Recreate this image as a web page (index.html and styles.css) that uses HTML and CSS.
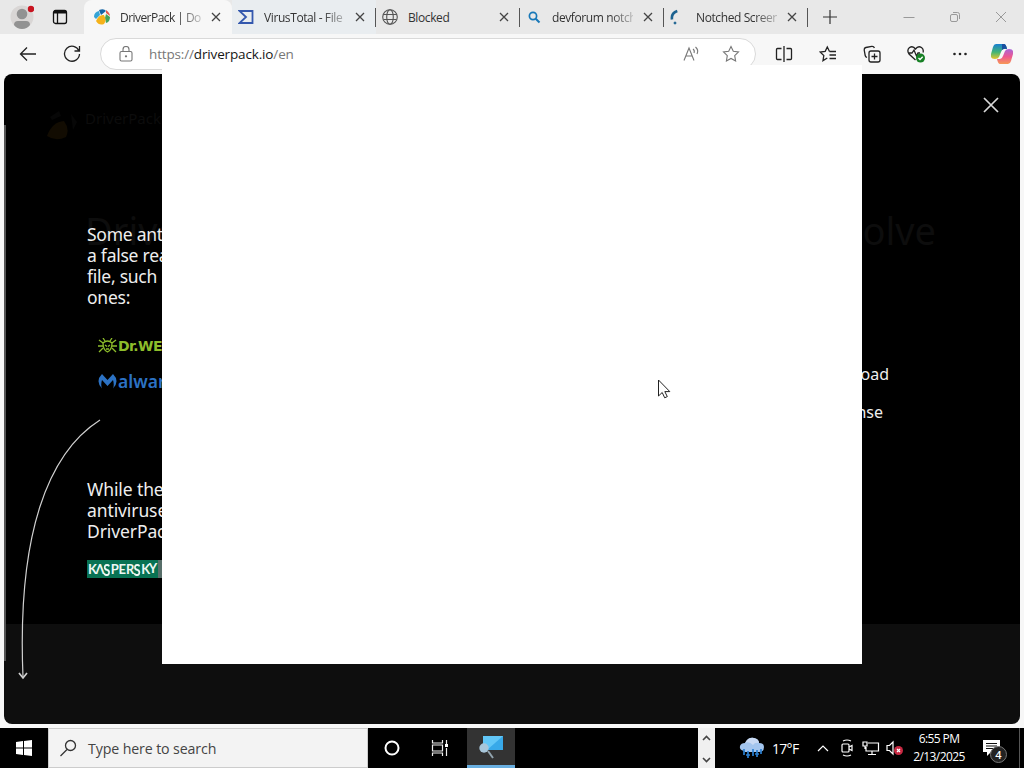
FILE: index.html
```html
<!DOCTYPE html>
<html lang="en">
<head>
    <meta charset="UTF-8">
    <meta name="viewport" content="width=device-width, initial-scale=1.0">
    <title>DriverPack</title>
    <link rel="stylesheet" href="styles.css">
</head>
<body>
    <!-- Tabs -->
    <div class="tab-bar">
        <div class="profile">
            <svg width="24" height="26" viewBox="0 0 24 26"><circle cx="12" cy="13" r="11.5" fill="#d9d6d5"/><circle cx="12" cy="10" r="5.3" fill="#929292"/><path d="M4 21q0-4 4-4h8q4 0 4 4-3 4-8 4t-8-4z" fill="#929292"/><circle cx="21" cy="5" r="3.2" fill="#c81420"/></svg>
        </div>
        <div class="tab-menu">
            <svg width="16" height="16" viewBox="0 0 16 16" fill="none" stroke="#111" stroke-width="1.3"><rect x="1.5" y="1.5" width="13" height="13" rx="2"/><path d="M2 3h12" stroke-width="3"/><path d="M5.5 4v10"/></svg>
        </div>
        <div class="tab active">
            <svg width="16" height="16" viewBox="0 0 16 16"><path d="M0 8Q0 3 5 2l1 4-4 4z" fill="#36a4d6"/><path d="M5 1q5-2 7 1L7 6z" fill="#1565a5"/><path d="M12 1q4 3 4 6l-4-3z" fill="#e2574c"/><path d="M12 5l4 3q0 5-4 6l-1-5z" fill="#45a45c"/><path d="M2 12Q5 5 10 6q3 6 0 9-5 2-8-3z" fill="#f5b21a"/></svg>
            <span class="tab-title fade">DriverPack | Do</span>
            <svg class="tab-close" width="10" height="10" viewBox="0 0 10 10"><path d="M1 1l8 8M9 1L1 9"/></svg>
        </div>
        <div class="tab">
            <svg width="16" height="16" viewBox="0 0 16 16" fill="none" stroke="#3458ae" stroke-width="1.8"><path d="M1.500 2h13v12h-13L8 8z"/></svg>
            <span class="tab-title fade">VirusTotal - File</span>
            <svg class="tab-close" width="10" height="10" viewBox="0 0 10 10"><path d="M1 1l8 8M9 1L1 9"/></svg>
        </div>
        <div class="tab">
            <svg width="16" height="16" viewBox="0 0 16 16" fill="none" stroke="#555" stroke-width="1.1"><circle cx="8" cy="8" r="7.3"/><ellipse cx="8" cy="8" rx="3.3" ry="7.3"/><path d="M1.500 5.500h13M1.500 10.500h13"/></svg>
            <span class="tab-title">Blocked</span>
            <svg class="tab-close" width="10" height="10" viewBox="0 0 10 10"><path d="M1 1l8 8M9 1L1 9"/></svg>
        </div>
        <div class="tab">
            <svg width="16" height="16" viewBox="0 0 16 16" fill="none" stroke="#1878b8" stroke-width="1.7"><circle cx="7" cy="7" r="3.6"/><path d="M9.700 9.700l3.800 3.800" stroke-width="2"/></svg>
            <span class="tab-title fade">devforum notch</span>
            <svg class="tab-close" width="10" height="10" viewBox="0 0 10 10"><path d="M1 1l8 8M9 1L1 9"/></svg>
        </div>
        <div class="tab">
            <svg width="16" height="16" viewBox="0 0 16 16" fill="none" stroke="#1c6290"><path d="M7.300 2Q1 4 2 10.500" stroke-width="2.6"/><circle cx="5" cy="14" r="1" fill="#1c6290"/></svg>
            <span class="tab-title fade">Notched Screen</span>
            <svg class="tab-close" width="10" height="10" viewBox="0 0 10 10"><path d="M1 1l8 8M9 1L1 9"/></svg>
        </div>
        <svg class="new-tab" width="14" height="14" viewBox="0 0 14 14"><path d="M7 0v14M0 7h14" stroke="#333" stroke-width="1.2"/></svg>
        <div class="window-buttons">
            <svg width="12" height="12" viewBox="0 0 12 12"><path d="M.5 6.500h11"/></svg>
            <svg width="12" height="12" viewBox="0 0 12 12"><rect x="1.500" y="3.500" width="7" height="7" rx="1.500"/><path d="M4 1.500h4.500q2 0 2 2V8"/></svg>
            <svg width="12" height="12" viewBox="0 0 12 12"><path d="M1 1l10 10M11 1L1 11"/></svg>
        </div>
    </div>

    <!-- Address bar -->
    <div class="toolbar">
        <div class="nav-buttons">
            <svg width="18" height="16" viewBox="0 0 18 16"><path d="M17 8H2M8 1.500L1.500 8 8 14.500"/></svg>
            <svg width="18" height="18" viewBox="0 0 18 18"><path d="M16 6A7.500 7.500 0 1 0 16.500 9M16.500 1v5h-5"/></svg>
        </div>
        <div class="address">
            <svg class="lock" width="14" height="16" viewBox="0 0 14 16"><rect x="1" y="5.500" width="12" height="9.500" rx="1.500"/><path d="M4 5.500V3.500a3 3 0 0 1 6 0v2"/><circle cx="7" cy="10.300" r=".6"/></svg>
            <span class="url">https://<b>driverpack.io</b>/en</span>
            <svg class="read" width="17" height="16" viewBox="0 0 17 16"><path d="M1 14.500L6 2l5 12.500M3 10h6M10 3q2 1.500 1 4M12.500 1q3.500 3 1.500 7"/></svg>
            <svg class="star" width="18" height="18" viewBox="0 0 18 18"><path d="M9 1.500l2.300 4.800 5.200.7-3.800 3.700.9 5.200L9 13.400l-4.600 2.500.9-5.200L1.500 7l5.200-.7z"/></svg>
        </div>
        <div class="tool-icons">
            <svg width="18" height="18" viewBox="0 0 18 18"><path d="M6.500 3.500H2.500q-1 0-1 1v9q0 1 1 1h4M11.500 3.500h4q1 0 1 1v9q0 1-1 1h-4M9 1v16"/></svg>
            <svg width="18" height="18" viewBox="0 0 18 18"><path d="M10.500 6.500L8.300 2 6.200 6.400l-5 .7 3.600 3.500-.8 5L8.300 13M10.500 6.500H17M10.500 10H17M10.500 13.500H17"/></svg>
            <svg width="18" height="18" viewBox="0 0 18 18"><rect x="6" y="6" width="11" height="11" rx="2"/><path d="M11.500 8.500v6M8.500 11.500h6M4 12.500q-1.500-.5-1.800-2L1.200 5q-.2-2 1.600-2.500l6-1.200q2-.2 2.600 1.700"/></svg>
            <svg width="18" height="18" viewBox="0 0 18 18"><path d="M8.500 15L2 9Q-.5 5 2.500 2.500 6 .5 8.500 4 11 .5 14.500 2.500 17 4.500 16 7.500M1 8h4l2-3 2.500 6L11 8h2"/><circle cx="13.500" cy="13" r="4.500" fill="#178025" stroke="none"/><path d="M11.500 13l1.500 1.500 2.700-2.800" stroke="#fff"/></svg>
            <svg width="18" height="18" viewBox="0 0 18 18"><g fill="#222" stroke="none"><circle cx="3.500" cy="9" r="1.300"/><circle cx="9" cy="9" r="1.300"/><circle cx="14.500" cy="9" r="1.300"/></g></svg>
            <svg class="copilot" width="22" height="20" viewBox="0 0 22 20">
                <defs>
                    <linearGradient id="cool" x2="0" y2="1"><stop stop-color="#187fd2"/><stop offset=".55" stop-color="#45b574"/><stop offset="1" stop-color="#e8c52d"/></linearGradient>
                    <linearGradient id="warm" x2="0" y2="1"><stop stop-color="#a965da"/><stop offset=".5" stop-color="#ed5791"/><stop offset="1" stop-color="#f79955"/></linearGradient>
                </defs>
                <path d="M5 0h8q2 0 3 5h-3q-2 0-3 3l-2 5q-1 2-4 2-5 0-4-5l2-7q.8-3 3-3z" fill="url(#cool)" stroke="none"/>
                <path d="M17 20H9q-2 0-3-5h3q2 0 3-3l2-5q1-2 4-2 5 0 4 5l-2 7q-.8 3-3 3z" fill="url(#warm)" stroke="none"/>
                <path d="M11 0h2q2 0 3 5-3-1-5 1z" fill="#194f9e" stroke="none"/>
            </svg>
        </div>
    </div>

    <!-- Page -->
    <div class="page">
        <div class="site">
            <div class="brand">
                <svg width="34" height="32" viewBox="0 0 34 32"><path d="M1 28q5-14 17-15 6 8 2 16-10 5-19-1z" fill="#120c02"/><path d="M4 9l9-6 2 5-9 4zM25 6l6 8-4 8z" fill="#070707"/></svg>
                <span>DriverPack</span>
            </div>
            <div class="headline"><span>Driver</span><span>solve</span></div>
        </div>
        <div class="left-line"></div>
        <div class="notice">
            <p>Some anti<br>a false rea<br>file, such<br>ones:</p>
            <div class="vendor drweb">
                <svg width="19" height="16" viewBox="0 0 19 16" fill="none" stroke="#8dbd2b" stroke-width="1.300"><path d="M5 5L1 2M5 8H0M5 10l-4 4M14 5l4-3M14 8h5M14 10l4 4M7 3L5 0M12 3l2-3"/><path d="M5 5q4.500-4 9 0 0 7-4.500 9Q5 12 5 5zM7 7l2 1.500M12 7l-2 1.500M8 11h3"/></svg>
                <span>Dr.WEB</span>
            </div>
            <div class="vendor malware">
                <svg width="19" height="17" viewBox="0 0 19 17"><path d="M4 15.500Q-3 8 4 1l5.500 6L15 1q7 7 0 14.500 1.500-4 0-8.500l-5.500 6L4 7q-1.500 4.500 0 8.500z" fill="#2c72c4"/></svg>
                <span>alware</span>
            </div>
            <p class="second">While the<br>antiviruses<br>DriverPack</p>
            <div class="kaspersky">
                <span>K</span><span>Λ</span><span class="long">S</span><span>P</span><span>E</span><span>R</span><span class="long">S</span><span>K</span><span class="up">Y</span>
            </div>
        </div>
        <div class="agreement"><span>load</span><span>ense</span></div>
        <svg class="curve" width="86" height="266" viewBox="0 0 86 266" fill="none" stroke="#d0d0d0" stroke-width="1.200"><path d="M82 1C30 34-1 115 5 258"/><path d="M1 254l4 5 4-5" stroke-width="1.700"/></svg>
        <svg class="page-close" width="18" height="18" viewBox="0 0 18 18" stroke="#d8d8d8" stroke-width="1.700"><path d="M2 2l14 14M16 2L2 16"/></svg>
    </div>

    <!-- Blank window on top of the browser -->
    <div class="blank-window"></div>
    <svg class="cursor" width="14" height="21" viewBox="0 0 14 21"><path d="M1.500 1v16l3.700-3.500 2.500 5.300 2.600-1.200-2.500-5h5z" fill="#fff" stroke="#222"/></svg>

    <!-- Taskbar -->
    <div class="taskbar">
        <div class="start">
            <svg width="16" height="16" viewBox="0 0 16 16" fill="#fff"><path d="M0 2l7-1v6.500H0zM8 1l8-1v7.500H8zM0 8.500h7V15l-7-1zM8 8.500h8V16l-8-1z"/></svg>
        </div>
        <div class="search">
            <svg width="18" height="18" viewBox="0 0 18 18" fill="none" stroke="#333" stroke-width="1.300"><circle cx="11.500" cy="6.500" r="5"/><path d="M8 10.500L1.500 17"/></svg>
            <span>Type here to search</span>
        </div>
        <div class="task">
            <svg width="16" height="16" viewBox="0 0 16 16" fill="none" stroke="#fff" stroke-width="2"><circle cx="8" cy="8" r="6.500"/></svg>
        </div>
        <div class="task">
            <svg width="18" height="16" viewBox="0 0 18 16" fill="none" stroke="#eee" stroke-width="1.200"><path d="M1.500 0v3h10V0M1.500 16v-3h10v3"/><path d="M1.500 5v6h10V5zM15.500 0v4M15.500 8v8"/><path d="M14 4h3v3h-3z" fill="#fff" stroke="none"/></svg>
        </div>
        <div class="task running">
            <svg width="26" height="24" viewBox="0 0 26 24"><path d="M5 1h20v14H5z" fill="#38a9e9"/><path d="M5 1h20L9 15H5z" fill="#62c7f7"/><path d="M10 16l5 7" stroke="#92a4af" stroke-width="2"/><circle cx="6" cy="13" r="4.700" fill="#a8c6da"/></svg>
        </div>
        <div class="task-space"></div>
        <div class="scroller">
            <svg width="9" height="6" viewBox="0 0 9 6"><path d="M1 5l3.500-3.500L8 5"/></svg>
            <svg width="9" height="6" viewBox="0 0 9 6"><path d="M1 1l3.500 3.500L8 1"/></svg>
        </div>
        <div class="tray">
            <svg class="weather" width="26" height="22" viewBox="0 0 26 22"><path d="M5 14q-5-1-4-5 1-3 5-3 3-6 9-5 5 1 5 5 5 0 5 4 0 5-5 5H6z" fill="#a3c5ee"/><path d="M6 6q3-6 9-5 5 1 5 5-4-1-6 2-4-4-8-2z" fill="#c9daf4"/><path d="M5 12v6M9 14v7M14 12v7M18 13v7M22 12v5M7 18h4M16 17h4" stroke="#2b80d2" stroke-width="1.700"/></svg>
            <span class="degrees">17°F</span>
            <svg class="more" width="12" height="8" viewBox="0 0 12 8"><path d="M1 7l5-5 5 5"/></svg>
            <svg class="meet" width="14" height="18" viewBox="0 0 14 18"><rect x="2" y="5" width="7" height="8" rx="1"/><path d="M9 8l3-1.500v5L9 10M3 2q4-2 8 0M3 16q4 2 8 0"/></svg>
            <svg class="network" width="18" height="16" viewBox="0 0 18 16"><path d="M6 3h10.500v8H4V7M10 11v3M6 14.500h8M1 2h4v4H1zM3 6v3"/></svg>
            <svg class="volume" width="18" height="16" viewBox="0 0 18 16"><path d="M1 5.500h2.500L7 2v12l-3.500-3.500H1z"/><circle cx="12.500" cy="10.500" r="4.500" fill="#c82942" stroke="none"/><path d="M11 9l3 3M14 9l-3 3"/></svg>
            <div class="clock"><span>6:55 PM</span><span>2/13/2025</span></div>
            <div class="messages">
                <svg width="17" height="16" viewBox="0 0 17 16"><path d="M0 0h17v12H8l-4 4v-4H0z" fill="#fff"/><path d="M3 3.500h11M3 6h11M3 8.500h8" stroke="#111"/></svg>
                <span class="badge">4</span>
            </div>
        </div>
    </div>
</body>
</html>
```
FILE: styles.css
```css
* {
    box-sizing: border-box;
}
body {
    margin: 0;
    height: 768px;
    display: flex;
    flex-direction: column;
    overflow: hidden;
    background-color: #f7f7f7;
    font-family: "Open Sans", "Noto Sans", sans-serif;
    position: relative;
}
svg {
    display: block;
    flex-shrink: 0;
}

/* tabs */
.tab-bar {
    height: 34px;
    flex-shrink: 0;
    display: flex;
    align-items: center;
    background-color: #e8e8e8;
}
.profile {
    width: 44px;
    padding-left: 10px;
}
.tab-menu {
    width: 40px;
    padding-left: 8px;
}
.tab {
    width: 144px;
    height: 34px;
    display: flex;
    align-items: center;
    padding: 0 11px 0 6px;
    background: linear-gradient(#555, #555) right center / 1px 19px no-repeat;
}
.tab.active {
    width: 148px;
    padding-left: 10px;
    background: #f7f7f7;
    border-radius: 8px 8px 0 0;
}
.tab.active + .tab {
    background-color: #e9edf0;
}
.tab-title {
    width: 81px;
    margin-left: 10px;
    overflow: hidden;
    white-space: nowrap;
    font-size: 12px;
    letter-spacing: -0.4px;
    color: #333;
}
.active .tab-title {
    letter-spacing: -0.55px;
}
.fade {
    -webkit-mask-image: linear-gradient(to right, #000 72%, rgba(0,0,0,0.25));
    mask-image: linear-gradient(to right, #000 72%, rgba(0,0,0,0.25));
}
.tab-close {
    margin-left: auto;
    stroke: #444;
    stroke-width: 1.3;
}
.new-tab {
    margin-left: 15px;
}
.window-buttons {
    margin-left: auto;
    padding-right: 17px;
    display: flex;
    gap: 34px;
}
.window-buttons svg {
    fill: none;
    stroke: #999;
}

/* toolbar */
.toolbar {
    height: 40px;
    flex-shrink: 0;
    display: flex;
    align-items: center;
    background-color: #f7f7f7;
}
.nav-buttons {
    width: 100px;
    padding-left: 19px;
    display: flex;
    align-items: center;
    gap: 26px;
}
.nav-buttons svg,
.tool-icons svg {
    fill: none;
    stroke: #222;
    stroke-width: 1.3;
}
.address {
    width: 656px;
    height: 32px;
    display: flex;
    align-items: center;
    padding: 0 15px 0 18px;
    background-color: #fff;
    border: 1px solid #d9d9d9;
    border-radius: 16px;
}
.address svg {
    fill: none;
    stroke: #777;
    stroke-width: 1.1;
}
.url {
    margin-left: 16px;
    font-size: 13.5px;
    letter-spacing: -0.15px;
    color: #777;
}
.url b {
    color: #151515;
    font-weight: normal;
}
.read {
    margin-left: auto;
}
.star {
    margin-left: 22px;
}
.tool-icons {
    display: flex;
    align-items: center;
    gap: 26px;
    padding-left: 19px;
}
.tool-icons .copilot {
    margin-left: -4px;
}

/* page */
.page {
    position: relative;
    height: 650px;
    flex-shrink: 0;
    margin: 0 4px;
    border-radius: 8px;
    overflow: hidden;
    background: linear-gradient(#000 550px, #0e0e0e 550px);
    font-family: "Noto Sans", sans-serif;
}
.site {
    position: absolute;
    top: 34px;
    left: 42px;
    right: 84px;
    color: #0c0c0c;
}
.brand {
    display: flex;
    gap: 5px;
    font-size: 15px;
}
.headline {
    margin-top: 61px;
    padding-left: 39px;
    display: flex;
    justify-content: space-between;
    font-size: 38px;
    line-height: 58px;
    color: #0d0d0d;
}
.left-line {
    position: absolute;
    left: 0;
    top: 51px;
    width: 2px;
    height: 536px;
    background-color: #555;
}
.notice {
    position: relative;
    padding: 150px 0 0 83px;
    width: 190px;
    color: #eee;
}
.notice p {
    margin: 0;
    white-space: nowrap;
    font-size: 17.5px;
    line-height: 21px;
    letter-spacing: -0.25px;
}
.vendor {
    display: flex;
    align-items: center;
    height: 20px;
    gap: 1px;
    margin-left: 11px;
}
.drweb {
    margin-top: 28px;
    color: #8dbd2b;
    font-family: "DejaVu Sans", sans-serif;
    font-size: 14px;
    font-weight: bold;
    letter-spacing: -0.6px;
}
.malware {
    margin-top: 15px;
    color: #2c72c4;
    font-size: 17.5px;
    font-weight: 600;
}
.notice .second {
    margin-top: 88px;
    letter-spacing: -0.1px;
}
.kaspersky {
    margin-top: 18px;
    width: 90px;
    height: 18px;
    padding-left: 1px;
    display: flex;
    align-items: center;
    background: linear-gradient(to right, #087253 71px, #576e69 71px);
    color: #edf7f3;
    font-family: Lato, sans-serif;
    font-size: 13px;
    font-weight: bold;
    line-height: 18px;
}
.kaspersky span {
    width: 7.6px;
}
.kaspersky .long {
    transform: scaleY(1.35);
}
.kaspersky .up {
    transform: translateY(-1px);
}
.agreement {
    position: absolute;
    top: 281px;
    right: 131px;
    display: flex;
    flex-direction: column;
    align-items: flex-end;
    color: #eee;
    font-size: 16px;
    line-height: 38px;
}
.agreement span:last-child {
    margin-right: 6px;
}
.curve {
    position: absolute;
    left: 14px;
    top: 345px;
}
.page-close {
    position: absolute;
    right: 20px;
    top: 22px;
}

.blank-window {
    position: absolute;
    left: 162px;
    top: 65px;
    width: 700px;
    height: 599px;
    background-color: #fff;
}
.cursor {
    position: absolute;
    left: 657px;
    top: 379px;
}

/* taskbar */
.taskbar {
    height: 40px;
    flex-shrink: 0;
    margin-top: 4px;
    display: flex;
    background-color: #000;
    color: #fff;
}
.start,
.task {
    width: 48px;
    display: flex;
    align-items: center;
    justify-content: center;
}
.search {
    width: 320px;
    display: flex;
    align-items: center;
    gap: 11px;
    padding-left: 10px;
    background-color: #f3f3f3;
    border: 1px solid #ccc;
    color: #444;
    font-size: 14.2px;
    letter-spacing: -0.12px;
}
.running {
    margin-left: 3px;
    background-color: #333;
    border-bottom: 3px solid #69afe0;
}
.task-space {
    width: 183px;
}
.scroller {
    width: 17px;
    padding: 7px 4px 5px;
    display: flex;
    flex-direction: column;
    justify-content: space-between;
    background-color: #f0f0f0;
}
.scroller svg {
    fill: none;
    stroke: #444;
    stroke-width: 1.6;
}
.tray {
    width: 305px;
    margin-right: 4px;
    display: flex;
    align-items: center;
    padding-left: 24px;
    border-right: 1px solid #555;
}
.tray svg {
    fill: none;
    stroke: #fff;
    stroke-width: 1.2;
}
.tray .weather {
    stroke: none;
}
.degrees {
    width: 45px;
    margin-left: 7px;
    font-size: 14px;
    letter-spacing: -0.7px;
}
.meet {
    margin-left: 11px;
}
.network {
    margin-left: 8px;
}
.volume {
    margin-left: 6px;
}
.clock {
    width: 70px;
    display: flex;
    flex-direction: column;
    align-items: center;
    font-size: 12px;
    line-height: 18px;
    letter-spacing: -0.6px;
}
.messages {
    position: relative;
    margin-left: 9px;
}
.messages svg {
    stroke: none;
}
.badge {
    position: absolute;
    left: 7px;
    top: 6px;
    width: 17px;
    height: 17px;
    border: 1px solid #777;
    border-radius: 50%;
    background-color: #222;
    font-size: 11px;
    font-weight: 600;
    line-height: 15px;
    text-align: center;
}
```
